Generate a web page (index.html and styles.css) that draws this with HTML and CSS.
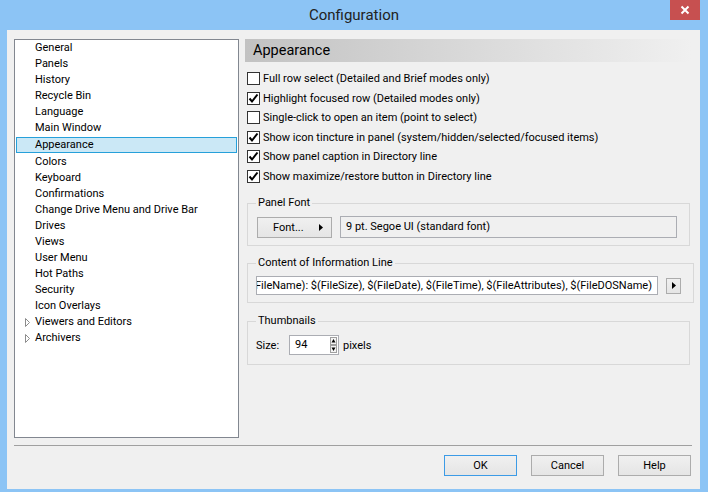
FILE: index.html
```html
<!DOCTYPE html>
<html lang="en">

<head>
    <meta charset="UTF-8">
    <title>Configuration</title>
    <link rel="stylesheet" href="styles.css">
</head>

<body>
    <div class="window">
        <!-- title bar -->
        <div class="titlebar">
            <span class="title">Configuration</span>
            <button class="close">
                <svg width="10" height="10" viewBox="0 0 10 10"><path d="M1.5 1.5 L8.5 8.5 M8.5 1.5 L1.5 8.5" stroke="#fff" stroke-width="2"/></svg>
            </button>
        </div>

        <div class="client">
            <div class="main">
                <!-- left tree -->
                <ul class="tree">
                    <li>General</li>
                    <li>Panels</li>
                    <li>History</li>
                    <li>Recycle Bin</li>
                    <li>Language</li>
                    <li>Main Window</li>
                    <li class="selected">Appearance</li>
                    <li>Colors</li>
                    <li>Keyboard</li>
                    <li>Confirmations</li>
                    <li>Change Drive Menu and Drive Bar</li>
                    <li>Drives</li>
                    <li>Views</li>
                    <li>User Menu</li>
                    <li>Hot Paths</li>
                    <li>Security</li>
                    <li>Icon Overlays</li>
                    <li class="branch"><svg class="expander" width="6" height="9" viewBox="0 0 6 9"><path d="M0.5 0.5 L4.5 4.5 L0.5 8.5 Z" fill="none" stroke="#8c8c8c"/></svg>Viewers and Editors</li>
                    <li class="branch"><svg class="expander" width="6" height="9" viewBox="0 0 6 9"><path d="M0.5 0.5 L4.5 4.5 L0.5 8.5 Z" fill="none" stroke="#8c8c8c"/></svg>Archivers</li>
                </ul>

                <!-- right page -->
                <div class="page">
                    <div class="page-head">Appearance</div>

                    <div class="checks">
                        <label class="check"><span class="box"></span>Full row select (Detailed and Brief modes only)</label>
                        <label class="check"><span class="box"><svg width="11" height="11" viewBox="0 0 11 11"><path d="M1.5 5.5 L4 8.5 L9.5 1.5" fill="none" stroke="#000" stroke-width="2"/></svg></span>Highlight focused row (Detailed modes only)</label>
                        <label class="check"><span class="box"></span>Single-click to open an item (point to select)</label>
                        <label class="check"><span class="box"><svg width="11" height="11" viewBox="0 0 11 11"><path d="M1.5 5.5 L4 8.5 L9.5 1.5" fill="none" stroke="#000" stroke-width="2"/></svg></span>Show icon tincture in panel (system/hidden/selected/focused items)</label>
                        <label class="check"><span class="box"><svg width="11" height="11" viewBox="0 0 11 11"><path d="M1.5 5.5 L4 8.5 L9.5 1.5" fill="none" stroke="#000" stroke-width="2"/></svg></span>Show panel caption in Directory line</label>
                        <label class="check"><span class="box"><svg width="11" height="11" viewBox="0 0 11 11"><path d="M1.5 5.5 L4 8.5 L9.5 1.5" fill="none" stroke="#000" stroke-width="2"/></svg></span>Show maximize/restore button in Directory line</label>
                    </div>

                    <fieldset class="group">
                        <legend>Panel Font</legend>
                        <div class="row">
                            <button class="btn font-btn"><span>Font...</span><svg width="4" height="7" viewBox="0 0 4 7"><path d="M0 0 L4 3.5 L0 7 Z" fill="#000"/></svg></button>
                            <div class="field readonly">9 pt. Segoe UI (standard font)</div>
                        </div>
                    </fieldset>

                    <fieldset class="group">
                        <legend>Content of Information Line</legend>
                        <div class="row">
                            <div class="field info"><span>$(FileName): $(FileSize), $(FileDate), $(FileTime), $(FileAttributes), $(FileDOSName)</span></div>
                            <button class="btn arrow-btn"><svg width="4" height="7" viewBox="0 0 4 7"><path d="M0 0 L4 3.5 L0 7 Z" fill="#000"/></svg></button>
                        </div>
                    </fieldset>

                    <fieldset class="group thumbs">
                        <legend>Thumbnails</legend>
                        <div class="row">
                            <span class="size-label">Size:</span>
                            <div class="spin">
                                <span class="spin-value">94</span>
                                <span class="spin-arrows">
                                    <svg width="7" height="8" viewBox="0 0 7 8"><rect x="0.5" y="0.5" width="6" height="7" fill="#f4f4f4" stroke="#a0a0a0"/><path d="M1.5 5.5 L3.5 2 L5.5 5.5 Z" fill="#000"/></svg>
                                    <svg width="7" height="8" viewBox="0 0 7 8"><rect x="0.5" y="0.5" width="6" height="7" fill="#f4f4f4" stroke="#a0a0a0"/><path d="M1.5 2.5 L3.5 6 L5.5 2.5 Z" fill="#000"/></svg>
                                </span>
                            </div>
                            <span class="unit">pixels</span>
                        </div>
                    </fieldset>
                </div>
            </div>

            <div class="separator"></div>

            <div class="buttons">
                <button class="btn default">OK</button>
                <button class="btn">Cancel</button>
                <button class="btn">Help</button>
            </div>
        </div>
    </div>
</body>

</html>
```

FILE: styles.css
```css
body {
    margin: 0;
    background: #8cc4f5;
    font-family: Roboto, "Noto Sans", sans-serif;
    font-size: 11px;
    color: #000;
}

.window {
    width: 708px;
    height: 492px;
    display: flex;
    flex-direction: column;
}

/* title bar */
.titlebar {
    height: 30px;
    flex-shrink: 0;
    display: grid;
    grid-template-columns: 1fr auto 1fr;
    align-items: start;
}

.titlebar .title {
    grid-column: 2;
    font-size: 15px;
    line-height: 31px;
    color: #222;
}

.titlebar .close {
    grid-column: 3;
    justify-self: end;
    width: 30px;
    height: 20px;
    margin-right: 8px;
    padding: 0;
    border: 0;
    background: #c75050;
    display: flex;
    align-items: center;
    justify-content: center;
}

/* client area */
.client {
    flex: 1;
    margin: 0 8px 3px 7px;
    padding: 9px 8px 0 7px;
    background: #f0f0f0;
}

.main {
    display: flex;
    gap: 6px;
}

.tree {
    width: 225px;
    height: 399px;
    box-sizing: border-box;
    margin: 0;
    padding: 0;
    list-style: none;
    border: 1px solid #828790;
    background: #fff;
}

.tree li {
    height: 16px;
    line-height: 16px;
    padding-left: 20px;
    white-space: nowrap;
}

.tree li.selected {
    height: 14px;
    line-height: 14px;
    margin: 1px;
    padding-left: 18px;
    border: 1px solid #26a0da;
    background: #cbe8f6;
}

.tree li.branch {
    padding-left: 10px;
    display: flex;
    align-items: center;
}

.tree .expander {
    margin-right: 4px;
}

/* right page */
.page {
    width: 447px;
}

.page-head {
    height: 23px;
    padding-left: 8px;
    font-size: 14.5px;
    line-height: 23px;
    background: linear-gradient(to right, #c2c2c2, #f0f0f0);
}

.checks {
    margin-top: 7px;
    padding-left: 2px;
}

.check {
    height: 19.5px;
    display: flex;
    align-items: center;
    gap: 3px;
    white-space: nowrap;
}

.check .box {
    width: 13px;
    height: 13px;
    box-sizing: border-box;
    border: 1px solid #333;
    background: #fff;
    display: flex;
    align-items: center;
    justify-content: center;
}

.group {
    margin: 9px 2px 0 2px;
    padding: 5px 12px 7px 8px;
    border: 1px solid #d8d8d8;
}

.group.thumbs {
    margin-top: 10px;
    padding-top: 6px;
    padding-bottom: 9px;
}

.group legend {
    padding: 0 2px;
    line-height: 16px;
}

.group .row {
    display: flex;
    align-items: center;
    gap: 8px;
}

.btn {
    height: 21px;
    padding: 0;
    border: 1px solid #acacac;
    background: linear-gradient(#f0f0f0, #e5e5e5);
    font: inherit;
    color: #000;
}

.font-btn {
    width: 75px;
    margin-left: 1px;
    padding: 0 8px 0 15px;
    display: flex;
    align-items: center;
    justify-content: space-between;
}

.field {
    box-sizing: border-box;
    border: 1px solid #abadb3;
    background: #fff;
    white-space: nowrap;
}

.field.readonly {
    flex: 1;
    height: 22px;
    line-height: 20px;
    padding-left: 5px;
    background: #f0f0f0;
}

.field.info {
    width: 402px;
    height: 19px;
    line-height: 17px;
    padding-right: 5px;
    overflow: hidden;
    display: flex;
    justify-content: flex-end;
}

.field.info span {
    flex-shrink: 0;
}

.arrow-btn {
    width: 15px;
    height: 16px;
    display: flex;
    align-items: center;
    justify-content: center;
}

.size-label {
    width: 33px;
}

.spin {
    width: 50px;
    height: 20px;
    box-sizing: border-box;
    margin-left: -8px;
    border: 1px solid #abadb3;
    background: #fff;
    display: flex;
    justify-content: space-between;
    align-items: center;
}

.spin-value {
    padding-left: 5px;
    line-height: 18px;
}

.spin-arrows {
    display: flex;
    flex-direction: column;
    margin-right: 1px;
}

.unit {
    margin-left: -4px;
}

/* bottom */
.separator {
    height: 1px;
    margin-top: 7px;
    background: #a0a0a0;
}

.buttons {
    display: flex;
    justify-content: flex-end;
    gap: 14px;
    margin-top: 9px;
    padding-right: 1px;
}

.buttons .btn {
    width: 73px;
}

.buttons .btn.default {
    border-color: #3c9be6;
}
```
